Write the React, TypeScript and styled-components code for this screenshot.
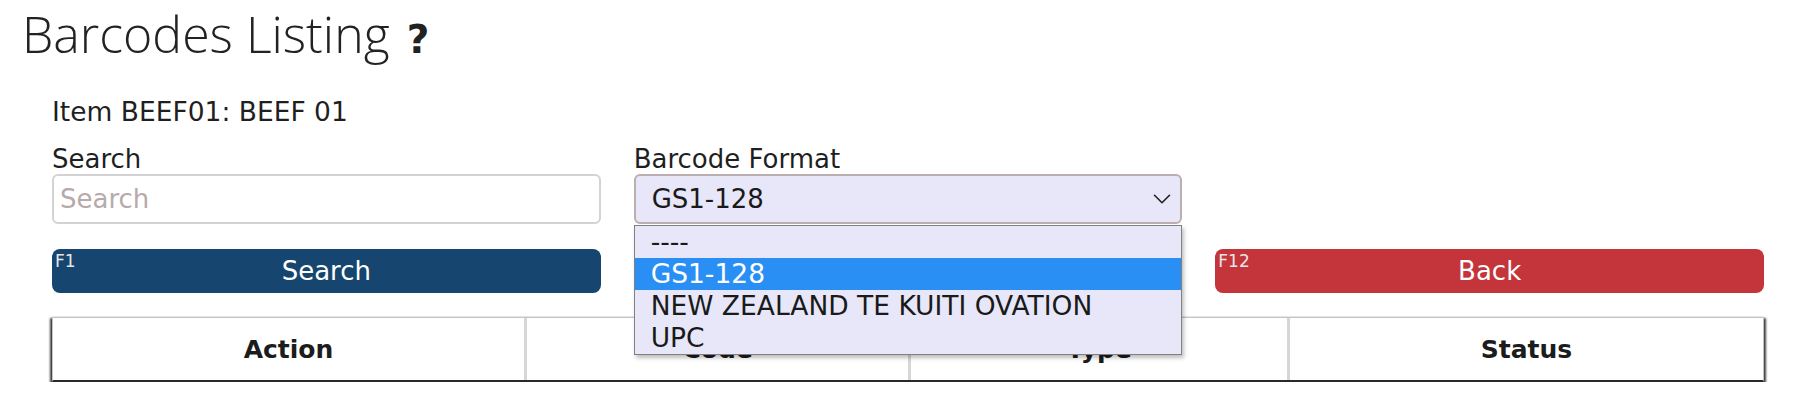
import React from "react";
import styled, { createGlobalStyle } from "styled-components";
import { ChevronDown } from "lucide-react";

const GlobalStyle = createGlobalStyle`
  html, body {
    margin: 0;
    padding: 0;
    background: #ffffff;
  }
  body {
    font-family: "DejaVu Sans", Tahoma, Verdana, sans-serif;
    color: #1f1f1f;
  }
`;

const Page = styled.div`
  width: 1817px;
  padding-top: 4px;
`;

const Title = styled.h1`
  margin: 0 0 0 22px;
  font-family: "Open Sans", "Noto Sans", sans-serif;
  font-weight: 300;
  font-size: 50px;
  line-height: 60px;
  color: #222;
`;

const Help = styled.span`
  font-family: "DejaVu Sans", sans-serif;
  font-weight: 700;
  font-size: 39px;
  line-height: 1;
  margin-left: 17px;
`;

const Content = styled.div`
  padding: 0 53px 0 52px;
`;

const ItemLine = styled.div`
  margin-top: 33px;
  font-size: 26.5px;
  line-height: 30px;
`;

const FormGrid = styled.div`
  display: grid;
  grid-template-columns: repeat(3, 1fr);
  column-gap: 33px;
  margin-top: 17px;
`;

const Field = styled.div`
  display: flex;
  flex-direction: column;
`;

const Label = styled.label`
  font-size: 26px;
  line-height: 30px;
`;

const TextInput = styled.input`
  box-sizing: border-box;
  height: 50px;
  width: 100%;
  border: 2px solid #d4d2d2;
  border-radius: 6px;
  padding: 0 6px;
  font-family: inherit;
  font-size: 26px;
  color: #222;
  background: #fff;
  outline: none;
  &::placeholder {
    color: #b7aaaa;
  }
`;

const SelectWrap = styled.div`
  position: relative;
`;

const SelectBox = styled.div`
  box-sizing: border-box;
  height: 50px;
  display: flex;
  align-items: center;
  justify-content: space-between;
  padding: 0 3px 0 16px;
  border: 2px solid #bcaeae;
  border-radius: 6px;
  background: #e7e7f9;
  font-size: 26px;
  color: #1a1a1a;
`;

const OptionList = styled.ul`
  position: absolute;
  top: 51px;
  left: 0;
  right: 0;
  margin: 0;
  padding: 0;
  list-style: none;
  border: 1px solid #808080;
  background: #e7e7f9;
  box-shadow: 2px 3px 4px rgba(0, 0, 0, 0.25);
  z-index: 10;
`;

const Option = styled.li<{ $selected?: boolean }>`
  height: 32px;
  line-height: 32px;
  padding-left: 16px;
  font-size: 26.5px;
  color: ${p => (p.$selected ? "#ffffff" : "#1a1a1a")};
  background: ${p => (p.$selected ? "#2a8ff5" : "transparent")};
`;

const ButtonRow = styled.div`
  display: grid;
  grid-template-columns: repeat(3, 1fr);
  column-gap: 33px;
  margin-top: 25px;
`;

const KeyButton = styled.button<{ $tone: "primary" | "danger" }>`
  position: relative;
  height: 44px;
  padding: 0;
  border: none;
  border-radius: 8px;
  background: ${p => (p.$tone === "primary" ? "#16466f" : "#c3343b")};
  color: #fff;
  font-family: inherit;
  font-size: 26px;
  cursor: pointer;
`;

const KeyHint = styled.span`
  position: absolute;
  top: 2px;
  left: 3px;
  font-size: 17px;
  line-height: 20px;
  color: #e6e6e6;
`;

const TableFrame = styled.div`
  margin-top: 24px;
  border: 1px solid #c4c4c4;
  border-bottom: 2px solid #2a2a2a;
  background: #fff;
  box-shadow: 0 3px 2px rgba(0, 0, 0, 0.55), 2px 1px 2px rgba(0, 0, 0, 0.7),
    -2px 1px 2px rgba(0, 0, 0, 0.7);
`;

const Table = styled.table`
  width: 100%;
  border-collapse: collapse;
  table-layout: fixed;
`;

const Col = styled.col<{ $pct: number }>`
  width: ${p => p.$pct}%;
`;

const Th = styled.th`
  height: 62px;
  padding: 0;
  font-size: 25px;
  font-weight: 700;
  text-align: center;
  color: #1c1c1c;
  border-right: 3px solid #d6d6d6;
  &:last-child {
    border-right: none;
  }
`;

const formats = ["----", "GS1-128", "NEW ZEALAND TE KUITI OVATION", "UPC"];

const columns = [
  { name: "Action", width: 473 },
  { name: "Code", width: 385 },
  { name: "Type", width: 379 },
  { name: "Status", width: 475 }
];

const total = columns.reduce((s, c) => s + c.width, 0);

export default function App() {
  return (
    <Page>
      <GlobalStyle />
      <Title>
        Barcodes Listing<Help>?</Help>
      </Title>
      <Content>
        <ItemLine>Item BEEF01: BEEF 01</ItemLine>
        <FormGrid>
          <Field>
            <Label>Search</Label>
            <TextInput placeholder="Search" />
          </Field>
          <Field>
            <Label>Barcode Format</Label>
            <SelectWrap>
              <SelectBox>
                <span>GS1-128</span>
                <ChevronDown size={30} strokeWidth={1.3} color="#222" />
              </SelectBox>
              <OptionList>
                {formats.map(f => (
                  <Option key={f} $selected={f === "GS1-128"}>
                    {f}
                  </Option>
                ))}
              </OptionList>
            </SelectWrap>
          </Field>
        </FormGrid>
        <ButtonRow>
          <KeyButton $tone="primary">
            <KeyHint>F1</KeyHint>
            Search
          </KeyButton>
          <div />
          <KeyButton $tone="danger">
            <KeyHint>F12</KeyHint>
            Back
          </KeyButton>
        </ButtonRow>
        <TableFrame>
          <Table>
            <colgroup>
              {columns.map(c => (
                <Col key={c.name} $pct={(c.width / total) * 100} />
              ))}
            </colgroup>
            <thead>
              <tr>
                {columns.map(c => (
                  <Th key={c.name}>{c.name}</Th>
                ))}
              </tr>
            </thead>
          </Table>
        </TableFrame>
      </Content>
    </Page>
  );
}
